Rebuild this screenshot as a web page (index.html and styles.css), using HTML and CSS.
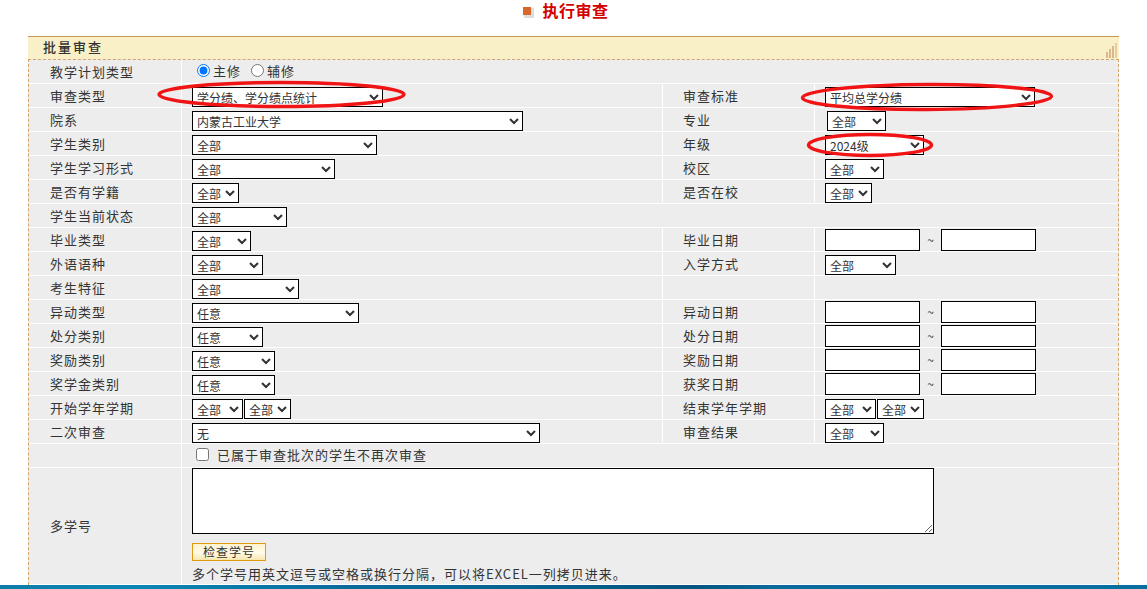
FILE: index.html
```html
<!DOCTYPE html>
<html lang="zh">
<head>
<meta charset="utf-8">
<title>执行审查</title>
<link rel="stylesheet" href="styles.css">
</head>
<body>
<h1 class="title"><svg class="title-icon" width="12" height="12" viewBox="0 0 12 12"><rect x="2" y="2" width="10" height="10" fill="#ddd"/><rect x="1" y="1" width="8" height="8" fill="#d9662a"/></svg>执行审查</h1>
<section class="panel">
<header class="panel-head">批量审查<svg class="bars" width="12" height="16" viewBox="0 0 12 16"><rect x="0" y="10" width="2" height="6" fill="#d9b98a"/><rect x="3" y="7" width="2" height="9" fill="#d9b98a"/><rect x="6" y="4" width="2" height="12" fill="#d9b98a"/><rect x="9" y="1" width="2" height="15" fill="#e4cda8"/></svg></header>
<table class="form">
<colgroup><col class="c1"><col class="c2"><col class="c3"><col class="c4"></colgroup>
<tr><th>教学计划类型</th><td colspan="3" class="radios"><label><input type="radio" name="t" checked>主修</label><label><input type="radio" name="t">辅修</label></td></tr>
<tr><th>审查类型</th><td><select class="w191"><option>学分绩、学分绩点统计</option></select></td><th>审查标准</th><td><select class="w210"><option>平均总学分绩</option></select></td></tr>
<tr><th>院系</th><td><select class="w331"><option>内蒙古工业大学</option></select></td><th>专业</th><td><select class="w59 inset"><option>全部</option></select></td></tr>
<tr><th>学生类别</th><td><select class="w185"><option>全部</option></select></td><th>年级</th><td><select class="w99"><option>2024级</option></select></td></tr>
<tr><th>学生学习形式</th><td><select class="w143"><option>全部</option></select></td><th>校区</th><td><select class="w59"><option>全部</option></select></td></tr>
<tr><th>是否有学籍</th><td><select class="w47"><option>全部</option></select></td><th>是否在校</th><td><select class="w47"><option>全部</option></select></td></tr>
<tr><th>学生当前状态</th><td colspan="3"><select class="w95"><option>全部</option></select></td></tr>
<tr><th>毕业类型</th><td><select class="w59"><option>全部</option></select></td><th>毕业日期</th><td class="dates"><input type="text"><span class="tilde">~</span><input type="text"></td></tr>
<tr><th>外语语种</th><td><select class="w71"><option>全部</option></select></td><th>入学方式</th><td><select class="w71"><option>全部</option></select></td></tr>
<tr><th>考生特征</th><td><select class="w107"><option>全部</option></select></td><th></th><td></td></tr>
<tr><th>异动类型</th><td><select class="w167"><option>任意</option></select></td><th>异动日期</th><td class="dates"><input type="text"><span class="tilde">~</span><input type="text"></td></tr>
<tr><th>处分类别</th><td><select class="w71"><option>任意</option></select></td><th>处分日期</th><td class="dates"><input type="text"><span class="tilde">~</span><input type="text"></td></tr>
<tr><th>奖励类别</th><td><select class="w83"><option>任意</option></select></td><th>奖励日期</th><td class="dates"><input type="text"><span class="tilde">~</span><input type="text"></td></tr>
<tr><th>奖学金类别</th><td><select class="w83"><option>任意</option></select></td><th>获奖日期</th><td class="dates"><input type="text"><span class="tilde">~</span><input type="text"></td></tr>
<tr><th>开始学年学期</th><td class="pair"><select class="w51"><option>全部</option></select><select class="w47"><option>全部</option></select></td><th>结束学年学期</th><td class="pair"><select class="w51"><option>全部</option></select><select class="w47"><option>全部</option></select></td></tr>
<tr><th>二次审查</th><td><select class="w348"><option>无</option></select></td><th>审查结果</th><td><select class="w59"><option>全部</option></select></td></tr>
<tr><th></th><td colspan="3" class="check"><label><input type="checkbox">已属于审查批次的学生不再次审查</label></td></tr>
<tr class="multi"><th>多学号</th><td colspan="3"><textarea></textarea><button type="button">检查学号</button><p class="hint">多个学号用英文逗号或空格或换行分隔，可以将EXCEL一列拷贝进来。</p></td></tr>
</table>
</section>
<svg class="marks" width="1147" height="589" viewBox="0 0 1147 589" fill="none" stroke="#f01414" stroke-width="3.4">
<ellipse cx="281.5" cy="94.5" rx="122.5" ry="12"/>
<ellipse cx="927" cy="97" rx="124.5" ry="12.5" transform="rotate(-0.3 927 97)"/>
<ellipse cx="870" cy="145" rx="61.5" ry="10.5"/>
</svg>
<div class="strip"></div>
</body>
</html>
```
FILE: styles.css
```css
* { box-sizing: border-box; }
html, body { height: 100%; }
body {
  margin: 0;
  height: 589px;
  overflow: hidden;
  background: #fff;
  font-family: "Noto Sans CJK SC", "Liberation Sans", sans-serif;
  font-size: 13px;
  letter-spacing: 1px;
  color: #333;
  position: relative;
}
.title {
  margin: 0;
  height: 36px;
  padding-right: 16px;
  text-align: center;
  font-size: 16px;
  line-height: 20px;
  font-weight: 700;
  color: #d40000;
  letter-spacing: 0.5px;
}
.title-icon { margin-right: 8px; vertical-align: -1px; }
.panel { margin: 0 28px 0 28px; }
.panel-head {
  height: 23px;
  position: relative;
  padding-left: 15px;
  background: #f9f0c8;
  border-top: 1px solid #c8965a;
  font-weight: 500;
  font-size: 13px;
  line-height: 20px;
  letter-spacing: 2px;
  color: #333;
}
.bars { position: absolute; right: 1px; bottom: 1px; }
.form {
  width: 1091px;
  table-layout: fixed;
  border-collapse: separate;
  border-spacing: 0;
  border: 1px dashed #d6a368;
  border-bottom: 0;
  background: #ededed;
}
.c1 { width: 153px; }
.c2 { width: 481px; }
.c3 { width: 152px; }
.form tr { height: 24px; }
.form th, .form td {
  padding: 0;
  border-right: 1px solid #fff;
  border-bottom: 1px solid #fff;
  height: 24px;
  vertical-align: middle;
}
.form th {
  font-weight: 400;
  text-align: left;
  padding: 0 0 1px 20px;
  white-space: nowrap;
}
.form tr > th:first-child { padding-left: 21px; }
.form td { padding-left: 10px; white-space: nowrap; }
.form td:last-child { border-right: 0; }
select, input[type=text], textarea, button { font-family: inherit; }
select {
  display: block;
  height: 20px;
  margin-top: 3px;
  padding: 0 0 1px;
  border: 1px solid #000;
  border-radius: 0;
  background-color: #fff;
  font-size: 12px;
  letter-spacing: 0;
  color: #333;
}
.inset { margin-left: 2px; }
.w47 { width: 47px; } .w51 { width: 51px; } .w59 { width: 59px; } .w71 { width: 71px; }
.w83 { width: 83px; } .w95 { width: 95px; } .w99 { width: 99px; } .w107 { width: 107px; }
.w143 { width: 143px; } .w167 { width: 167px; } .w185 { width: 185px; } .w191 { width: 191px; }
.w210 { width: 210px; } .w331 { width: 331px; } .w348 { width: 348px; }
.pair { font-size: 0; }
.pair select { display: inline-block; margin-right: 1px; vertical-align: top; }
.radios label { margin-right: 10px; display: inline-flex; align-items: center; }
.form .radios { padding: 0 0 1px 15px; }
.radios input { margin: 0 3px 0 0; width: 13px; height: 13px; }
.dates { font-size: 0; letter-spacing: 0; }
.dates input {
  width: 95px;
  height: 22px;
  padding: 0 2px;
  border: 1px solid #000;
  border-radius: 0;
  vertical-align: middle;
}
.tilde { display: inline-block; width: 21px; text-align: center; font-size: 12px; vertical-align: middle; }
.form .check { padding: 0 0 1px 14px; }
.check label { display: inline-flex; align-items: center; }
.check input { margin: 0 8px 0 0; width: 13px; height: 13px; }
.multi td { vertical-align: top; }
.multi th, .multi td { height: 117px; }
textarea {
  display: block;
  width: 742px;
  height: 66px;
  border: 1px solid #000;
  border-radius: 0;
  background: #fff;
}
button {
  display: block;
  width: 74px;
  height: 18px;
  margin-top: 9px;
  padding: 0;
  border: 1px solid #e29a12;
  border-radius: 0;
  background: linear-gradient(#fff3cf, #fffbe8 55%, #f8e6ac);
  font-size: 12px;
  line-height: 16px;
  letter-spacing: 1px;
  color: #333;
}
.hint { margin: 3px 0 0; line-height: 20px; }
.marks { position: absolute; left: 0; top: 0; pointer-events: none; }
.strip {
  position: absolute;
  left: 0;
  right: 0;
  top: 585px;
  height: 4px;
  background: linear-gradient(100deg, #0f7ca8, #0b86b4 12%, #0a6c9c 30%, #06648f 46%, #05557f 60%, #0a6c9c 68%, #08709f);
}
```
